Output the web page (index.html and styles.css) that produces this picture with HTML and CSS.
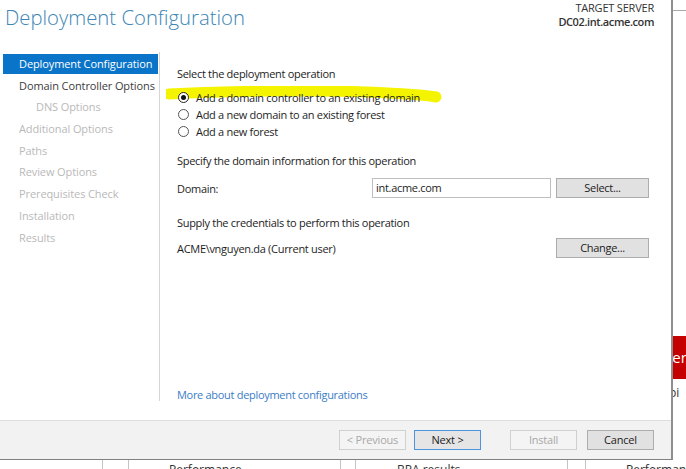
FILE: index.html
```html
<!DOCTYPE html>
<html>
<head>
<meta charset="utf-8">
<link rel="stylesheet" href="styles.css">
</head>
<body>
<div class="page">
  <div class="window">
    <header class="header">
      <h1 class="title">Deployment Configuration</h1>
      <div class="target">
        <div class="target-label">TARGET SERVER</div>
        <div class="target-name">DC02.int.acme.com</div>
      </div>
    </header>
    <div class="main">
      <nav class="nav">
        <div class="nav-item active">Deployment Configuration</div>
        <div class="nav-item normal">Domain Controller Options</div>
        <div class="nav-item sub">DNS Options</div>
        <div class="nav-item">Additional Options</div>
        <div class="nav-item">Paths</div>
        <div class="nav-item">Review Options</div>
        <div class="nav-item">Prerequisites Check</div>
        <div class="nav-item">Installation</div>
        <div class="nav-item">Results</div>
      </nav>
      <section class="content">
        <div class="label">Select the deployment operation</div>
        <div class="radios">
          <svg class="marker" width="290" height="22" viewBox="0 0 290 22"><path d="M3 8 C 60 5, 150 4, 200 6 S 260 9, 270 11" stroke="#f4f400" stroke-width="11" stroke-linecap="round" fill="none"/></svg>
          <div class="radio-row"><span class="radio checked"></span>Add a domain controller to an existing domain</div>
          <div class="radio-row"><span class="radio"></span>Add a new domain to an existing forest</div>
          <div class="radio-row"><span class="radio"></span>Add a new forest</div>
        </div>
        <div class="label sec2">Specify the domain information for this operation</div>
        <div class="field-row">
          <span class="field-label">Domain:</span>
          <span class="input">int.acme.com</span>
          <span class="btn select">Select...</span>
        </div>
        <div class="label sec3">Supply the credentials to perform this operation</div>
        <div class="cred-row">
          <span class="field-label">ACME\vnguyen.da (Current user)</span>
          <span class="btn">Change...</span>
        </div>
        <div class="spacer"></div>
        <a class="link">More about deployment configurations</a>
      </section>
    </div>
    <footer class="footer">
      <span class="btn fbtn disabled">&lt; Previous</span>
      <span class="btn fbtn next">Next &gt;</span>
      <span class="btn fbtn disabled install">Install</span>
      <span class="btn fbtn cancel">Cancel</span>
    </footer>
  </div>
  <div class="side">
    <div class="side-line"></div>
    <div class="side-red"><span>Serv</span></div>
    <div class="side-text"><span>Availabi</span></div>
  </div>
  <div class="bottom">
    <div class="cell c1"></div>
    <div class="cell c2"></div>
    <div class="cell c3">Performance</div>
    <div class="cell c4"></div>
    <div class="cell c5">BPA results</div>
    <div class="cell c6"></div>
    <div class="cell c7">Performanc</div>
  </div>
</div>
</body>
</html>
```

FILE: styles.css
```css
* { box-sizing: border-box; }
html, body { margin: 0; padding: 0; background: #fff; }
body {
  width: 686px; height: 469px; overflow: hidden;
  font-family: "Open Sans", "Noto Sans", sans-serif;
  font-size: 11px; color: #1e1e1e;
}
.page {
  display: grid;
  grid-template-columns: 673px 13px;
  grid-template-rows: 460px 9px;
  height: 469px;
}
.window {
  display: flex; flex-direction: column;
  border-right: 2px solid #8e8e8e;
  border-bottom: 1px solid #808080;
  background: #fff;
}
.header {
  height: 52px; display: flex; justify-content: space-between;
  padding: 0 17px 0 5px;
}
.title {
  margin: 0; font-weight: 300; font-size: 20.3px; color: #3b86b5;
  line-height: 34px;
}
.target { text-align: right; padding-top: 1px; color: #333; letter-spacing: -0.2px; }
.target-label { font-size: 11px; line-height: 14px; }
.target-name { font-size: 11px; line-height: 14px; font-weight: 600; letter-spacing: -0.4px; }
.main { flex: 1; display: flex; }
.nav {
  width: 160px; padding-top: 2px; margin-bottom: 19px;
  border-right: 1px solid #d6d6d6;
  letter-spacing: -0.1px;
}
.nav-item {
  height: 21.7px; line-height: 20px; padding-left: 19px;
  color: #b9b9b9; font-size: 11px; white-space: nowrap;
}
.nav-item.active {
  background: #0a74c8; color: #fff; margin-left: 3px; padding-left: 16px;
  width: 155px; height: 20px; margin-bottom: 1.7px;
}
.nav-item.normal { color: #3c3c3c; }
.nav-item.sub { padding-left: 36px; }
.content {
  flex: 1; display: flex; flex-direction: column;
  padding: 14px 20px 0 17px;
  letter-spacing: -0.3px;
}
.label { line-height: 16px; color: #222; }
.radios { position: relative; margin-top: 7px; }
.marker { position: absolute; left: -11px; top: -3px; }
.radio-row {
  position: relative; height: 17px; line-height: 16px; display: flex; align-items: center;
}
.radio {
  width: 11px; height: 11px; border-radius: 50%;
  border: 1px solid #555; background: #fff;
  margin: 0 7px 0 1px; position: relative; flex: none;
}
.radio.checked { border-color: #222; }
.radio.checked::after {
  content: ""; position: absolute; left: 2px; top: 2px;
  width: 5px; height: 5px; border-radius: 50%; background: #111;
}
.sec2 { margin-top: 13px; }
.field-row {
  display: flex; margin-top: 9px; align-items: center;
}
.field-row .field-label { width: 195px; }
.input {
  width: 179px;
  height: 20px; border: 1px solid #bfbfbf; line-height: 18px; padding-left: 3px;
}
.btn {
  display: inline-block; height: 20px; line-height: 18px; text-align: center;
  border: 1px solid #adadad; background: #e1e1e1; color: #222;
}
.select { width: 93px; margin-left: 5px; }
.sec3 { margin-top: 17px; }
.cred-row {
  display: flex; justify-content: space-between; align-items: center;
  margin-top: 7px; padding-right: 2px;
}
.cred-row .btn { width: 93px; }
.spacer { flex: 1; }
.link { color: #3b7dc7; line-height: 16px; margin-bottom: 17px; cursor: pointer; }
.footer {
  height: 39px; background: #f2f2f2; border-top: 1px solid #dedede;
  display: flex; align-items: center; justify-content: flex-end;
  padding: 0 17px 0 0;
  letter-spacing: -0.2px;
}
.fbtn { width: 67px; }
.fbtn.disabled { color: #a8a8a8; border-color: #d0d0d0; background: #f4f4f4; }
.fbtn.next { margin-left: 8px; border-color: #4a95e0; background: #e5e5e5; }
.fbtn.install { margin-left: 29px; }
.fbtn.cancel { margin-left: 10px; }
.side { position: relative; overflow: hidden; }
.side-line { margin-top: 10px; border-top: 1px solid #a8a8a8; }
.side-red {
  margin-top: 325px; height: 43px; background: #c40000; color: #fff;
  font-size: 15px; line-height: 43px; white-space: nowrap; overflow: hidden;
  text-indent: -9px;
}
.side-text {
  margin-top: 6px; font-size: 12px; line-height: 16px; white-space: nowrap;
  overflow: hidden; text-indent: -37px; color: #333;
}
.bottom {
  grid-column: 1 / span 2; display: flex; overflow: hidden;
  font-size: 12px; color: #333;
}
.cell {
  flex: none; height: 9px; border-left: 1px solid #c4c4c4;
  white-space: nowrap; line-height: 20px; overflow: visible;
}
.c1 { width: 102px; border-left: none; }
.c2 { width: 26px; }
.c3 { width: 212px; padding-left: 40px; }
.c4 { width: 15px; }
.c5 { width: 212px; padding-left: 41px; }
.c6 { width: 18px; }
.c7 { padding-left: 40px; }
```
